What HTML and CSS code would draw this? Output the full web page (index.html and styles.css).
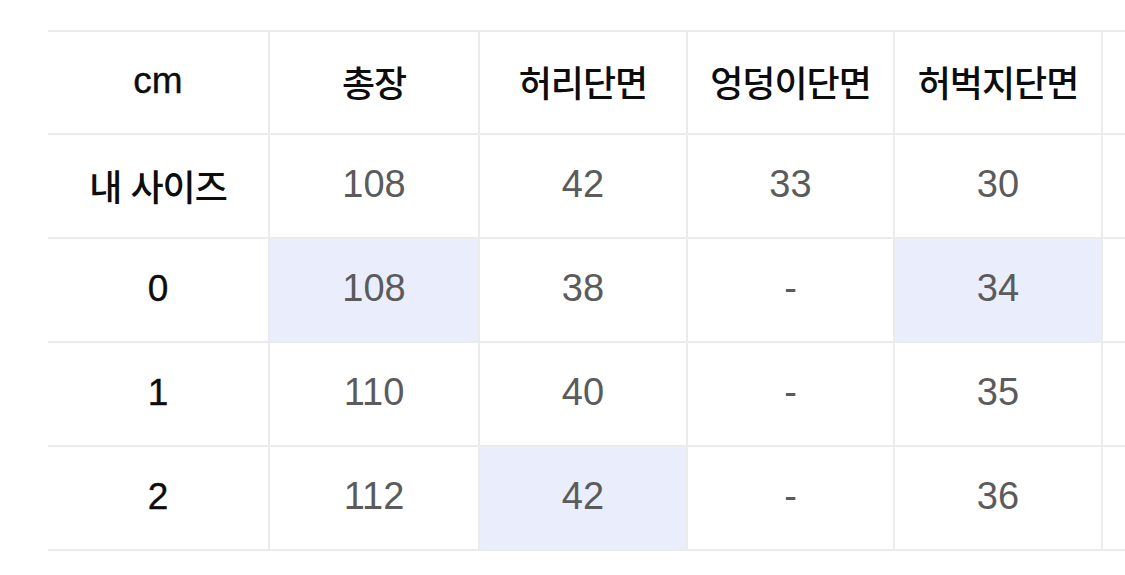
FILE: index.html
```html
<!DOCTYPE html>
<html lang="ko">
<head>
<meta charset="utf-8">
<link rel="stylesheet" href="styles.css">
</head>
<body>
<div class="size-table">
  <div class="cell head latin">cm</div>
  <div class="cell head ko">총장</div>
  <div class="cell head ko">허리단면</div>
  <div class="cell head ko">엉덩이단면</div>
  <div class="cell head ko">허벅지단면</div>
  <div class="cell head"></div>

  <div class="cell label ko">내 사이즈</div>
  <div class="cell val">108</div>
  <div class="cell val">42</div>
  <div class="cell val">33</div>
  <div class="cell val">30</div>
  <div class="cell val"></div>

  <div class="cell label latin">0</div>
  <div class="cell val hl">108</div>
  <div class="cell val">38</div>
  <div class="cell val">-</div>
  <div class="cell val hl">34</div>
  <div class="cell val"></div>

  <div class="cell label latin">1</div>
  <div class="cell val">110</div>
  <div class="cell val">40</div>
  <div class="cell val">-</div>
  <div class="cell val">35</div>
  <div class="cell val"></div>

  <div class="cell label latin">2</div>
  <div class="cell val">112</div>
  <div class="cell val hl">42</div>
  <div class="cell val">-</div>
  <div class="cell val">36</div>
  <div class="cell val"></div>
</div>
</body>
</html>
```

FILE: styles.css
```css
html, body {
  margin: 0;
  padding: 0;
  background: #ffffff;
  overflow: hidden;
  width: 1125px;
  height: 575px;
}

body {
  padding-top: 30px;
  padding-left: 48px;
  box-sizing: border-box;
}

.size-table {
  display: grid;
  grid-template-columns: 222px 210px 208px 207px 208px 80px;
  grid-template-rows: 103px 104px 104px 104px 104px;
  border-top: 2px solid #ebebeb;
  width: max-content;
}

.cell {
  box-sizing: border-box;
  border-right: 2px solid #ebebeb;
  border-bottom: 2px solid #ebebeb;
  display: flex;
  align-items: center;
  justify-content: center;
  font-family: "Liberation Sans", "Noto Sans CJK KR", sans-serif;
  font-size: 38px;
  color: #111111;
  padding-bottom: 3px;
}

.head,
.label {
  color: #0d0d0d;
}

.latin {
  font-size: 37px;
  -webkit-text-stroke: 0.4px #0d0d0d;
}

.ko {
  font-family: "Noto Sans CJK KR", "Liberation Sans", sans-serif;
  font-size: 36px;
  font-weight: 500;
  letter-spacing: -1px;
}

.val {
  color: #5b5b5b;
}

.hl {
  background: #e9edfc;
}
```
